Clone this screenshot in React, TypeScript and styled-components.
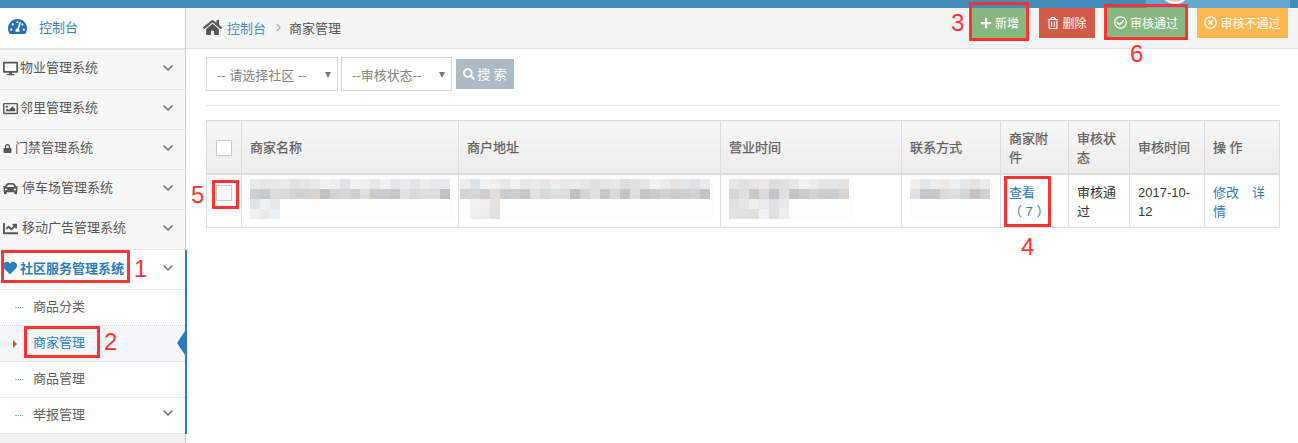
import React from 'react';
import styled, { createGlobalStyle } from 'styled-components';
import {
  FaCar,
  FaChartLine,
  FaDesktop,
  FaHeart,
  FaHome,
  FaLock,
  FaPlus,
  FaRegCheckCircle,
  FaRegImage,
  FaRegTimesCircle,
  FaRegTrashAlt,
  FaSearch,
  FaTachometerAlt,
} from 'react-icons/fa';
import { FiChevronDown, FiChevronRight } from 'react-icons/fi';

const GlobalStyle = createGlobalStyle`
  html, body {
    margin: 0;
    padding: 0;
    background: #fff;
    overflow: hidden;
  }
  body {
    font-family: "Liberation Sans", "Noto Sans CJK SC", sans-serif;
    font-size: 13px;
    color: #393939;
  }
  * {
    box-sizing: border-box;
  }
`;

const menuItems = [
  { label: '物业管理系统', icon: <FaDesktop size={15} />, gap: 2 },
  { label: '邻里管理系统', icon: <FaRegImage size={15} />, gap: 2 },
  { label: '门禁管理系统', icon: <FaLock size={9} />, gap: 3 },
  { label: '停车场管理系统', icon: <FaCar size={15} />, gap: 4 },
  { label: '移动广告管理系统', icon: <FaChartLine size={15} />, gap: 4 },
];

const subItems = [
  { label: '商品分类' },
  { label: '商家管理', active: true },
  { label: '商品管理' },
  { label: '举报管理', more: true },
];

// gray levels for the blurred out cells, each line is [first block, block count]
const hash = (a: number, b: number) => {
  const v = Math.sin(a * 12.9898 + b * 78.233) * 43758.5453;
  return v - Math.floor(v);
};

const Mosaic: React.FC<{ lines: [number, number][]; width: number; seed: number }> = ({ lines, width, seed }) => (
  <MosaicSvg width={width} height={40}>
    <rect x={0} y={0} width={width} height={40} rx={8} fill="#fcfcfc" />
    {lines.map(([start, count], row) =>
      Array.from({ length: count }).map((_, col) => {
        const base = row === 1 ? 192 : 222;
        const g = Math.round(base + hash(col + seed, row) * (row === 1 ? 34 : 20));
        const tint = Math.round(hash(col, row + seed) * 6) - 3;
        return (
          <rect
            key={`${row}-${col}`}
            x={(start + col) * 10}
            y={row * 10}
            width={10}
            height={10}
            fill={`rgb(${g + tint},${g},${g - tint})`}
          />
        );
      }),
    )}
  </MosaicSvg>
);

const App: React.FC = () => (
  <Stage>
    <GlobalStyle />
    <TopBar>
      <UserSlot>
        <Avatar />
      </UserSlot>
    </TopBar>
    <Body>
      <Sidebar>
        <Brand>
          <FaTachometerAlt size={19} />
          <span>控制台</span>
        </Brand>
        {menuItems.map((item) => (
          <MenuItem key={item.label} $gap={item.gap}>
            {item.icon}
            <span>{item.label}</span>
            <Chevron>
              <FiChevronDown size={16} />
            </Chevron>
          </MenuItem>
        ))}
        <OpenGroup>
          <MenuItem $gap={3} $open>
            <FaHeart size={14} />
            <span>社区服务管理系统</span>
            <Chevron>
              <FiChevronDown size={16} />
            </Chevron>
          </MenuItem>
          <SubMenu>
            {subItems.map((item) => (
              <SubItem key={item.label} $active={!!item.active}>
                <span>{item.label}</span>
                {item.more && (
                  <Chevron>
                    <FiChevronDown size={16} />
                  </Chevron>
                )}
              </SubItem>
            ))}
          </SubMenu>
        </OpenGroup>
      </Sidebar>
      <Main>
        <Toolbar>
          <Breadcrumb>
            <HomeIcon>
              <FaHome size={19} />
            </HomeIcon>
            <CrumbLink>控制台</CrumbLink>
            <CrumbSep>
              <FiChevronRight size={13} />
            </CrumbSep>
            <span>商家管理</span>
          </Breadcrumb>
          <Actions>
            <ActionButton $color="#87b87f" $width={55}>
              <FaPlus size={12} />
              新增
            </ActionButton>
            <ActionButton $color="#d15b47" $width={56}>
              <FaRegTrashAlt size={12} />
              删除
            </ActionButton>
            <ActionButton $color="#87b87f" $width={78}>
              <FaRegCheckCircle size={13} />
              审核通过
            </ActionButton>
            <ActionButton $color="#ffb752" $width={91}>
              <FaRegTimesCircle size={13} />
              审核不通过
            </ActionButton>
          </Actions>
        </Toolbar>
        <Content>
          <SearchRow>
            <SelectBox $width={132}>-- 请选择社区 --</SelectBox>
            <SelectBox $width={111}>--审核状态--</SelectBox>
            <SearchButton>
              <FaSearch size={12} />
              搜 索
            </SearchButton>
          </SearchRow>
          <DottedRule />
          <Table>
            <colgroup>
              <col width={35} />
              <col width={217} />
              <col width={262} />
              <col width={181} />
              <col width={99} />
              <col width={68} />
              <col width={61} />
              <col width={75} />
              <col width={75} />
            </colgroup>
            <thead>
              <tr>
                <Th>
                  <CheckBox />
                </Th>
                <Th>商家名称</Th>
                <Th>商户地址</Th>
                <Th>营业时间</Th>
                <Th>联系方式</Th>
                <Th>商家附件</Th>
                <Th>审核状态</Th>
                <Th>审核时间</Th>
                <Th>操 作</Th>
              </tr>
            </thead>
            <tbody>
              <tr>
                <Td>
                  <RowCheckBox $light />
                </Td>
                <MosaicTd $left={8}>
                  <Mosaic lines={[[0, 20], [0, 20], [0, 3], [0, 3]]} width={205} seed={3} />
                </MosaicTd>
                <MosaicTd $left={1}>
                  <Mosaic lines={[[0, 25], [0, 25], [1, 3], [1, 3]]} width={255} seed={11} />
                </MosaicTd>
                <MosaicTd $left={8}>
                  <Mosaic lines={[[0, 12], [0, 12], [0, 6], [0, 6]]} width={125} seed={23} />
                </MosaicTd>
                <MosaicTd $left={8}>
                  <Mosaic lines={[[0, 8], [0, 8]]} width={84} seed={37} />
                </MosaicTd>
                <Td>
                  <Link>
                    查看
                    <br />
                    （ 7 ）
                  </Link>
                </Td>
                <Td>审核通过</Td>
                <Td>2017-10-12</Td>
                <Td>
                  <Link>修改</Link>
                  <OpLink>详</OpLink>
                  <br />
                  <Link>情</Link>
                </Td>
              </tr>
            </tbody>
          </Table>
        </Content>
      </Main>
    </Body>

    <Marker $x={1} $y={250} $w={129} $h={33} />
    <Digit $x={134} $y={255}>1</Digit>
    <Marker $x={24} $y={326} $w={76} $h={32} />
    <Digit $x={104} $y={328}>2</Digit>
    <Marker $x={969} $y={2} $w={60} $h={39} />
    <Digit $x={951} $y={9}>3</Digit>
    <Marker $x={1004} $y={176} $w={47} $h={51} />
    <Digit $x={1021} $y={233}>4</Digit>
    <Marker $x={212} $y={180} $w={27} $h={29} />
    <Digit $x={191} $y={181}>5</Digit>
    <Marker $x={1104} $y={4} $w={84} $h={36} />
    <Digit $x={1130} $y={40}>6</Digit>
  </Stage>
);

const Stage = styled.div`
  position: relative;
  width: 1298px;
  height: 443px;
  overflow: hidden;
`;

const TopBar = styled.div`
  height: 8px;
  background: #438eb9;
  display: flex;
  justify-content: flex-end;
  padding-right: 8px;
`;

const UserSlot = styled.div`
  width: 144px;
  height: 8px;
  background: #62a8d1;
  overflow: hidden;
  padding-left: 14px;
`;

const Avatar = styled.div`
  width: 30px;
  height: 30px;
  margin-top: -26px;
  border-radius: 50%;
  border: 2px solid #fff;
  background: #e8c9bd;
`;

const Body = styled.div`
  display: flex;
  height: 435px;
`;

const Sidebar = styled.aside`
  width: 186px;
  flex: none;
  background: #f2f2f2;
  border-right: 1px solid #ccc;
`;

const Brand = styled.div`
  height: 42px;
  display: flex;
  align-items: center;
  gap: 12px;
  padding: 0 0 3px 8px;
  background: #fff;
  border-bottom: 2px solid #e5e5e5;
  color: #2b6fb0;

  span {
    color: #3d7fb8;
  }
`;

const MenuItem = styled.div<{ $gap: number; $open?: boolean }>`
  height: 40px;
  display: flex;
  align-items: center;
  gap: ${(p) => p.$gap}px;
  padding: 0 9px 3px 3px;
  background: ${(p) => (p.$open ? '#fff' : '#f8f8f8')};
  border-bottom: 1px solid #e5e5e5;
  color: ${(p) => (p.$open ? '#2b7dbc' : '#585858')};
  font-weight: ${(p) => (p.$open ? 700 : 400)};

  svg {
    flex: none;
  }

  > span:first-of-type {
    padding-bottom: ${(p) => (p.$open ? '1px' : '3px')};
  }
`;

const Chevron = styled.span`
  margin-left: auto;
  display: flex;
  color: #666;
  font-weight: 400;
`;

const OpenGroup = styled.div`
  margin-right: -2px;
  border-right: 2px solid #2b7dbc;
  position: relative;
`;

const SubMenu = styled.div`
  position: relative;
  background: #fff;
  border-bottom: 1px solid #e5e5e5;

  &::before {
    content: '';
    position: absolute;
    left: 14px;
    top: 0;
    bottom: 0;
    border-left: 1px dotted #7ea6cc;
  }
`;

const SubItem = styled.div<{ $active: boolean }>`
  position: relative;
  height: 36px;
  display: flex;
  align-items: center;
  padding: 0 9px 5px 33px;
  background: ${(p) => (p.$active ? '#f4f6f9' : '#fff')};
  border-bottom: 1px dotted #d8d8d8;
  color: ${(p) => (p.$active ? '#2b7dbc' : '#616161')};

  &:last-child {
    height: 35px;
    border-bottom: none;
  }

  &::before {
    content: '';
    position: absolute;
    top: 17px;
    left: ${(p) => (p.$active ? '13px' : '15px')};
    width: ${(p) => (p.$active ? '0' : '8px')};
    ${(p) =>
      p.$active
        ? `border-left: 4px solid #c86139; border-top: 4px solid transparent; border-bottom: 4px solid transparent; margin-top: -3px;`
        : `border-top: 1px dotted #7ea6cc;`}
  }

  &::after {
    content: '';
    display: ${(p) => (p.$active ? 'block' : 'none')};
    position: absolute;
    right: 0;
    top: 5px;
    border-right: 8px solid #2b7dbc;
    border-top: 12px solid transparent;
    border-bottom: 12px solid transparent;
  }
`;

const Main = styled.main`
  flex: 1;
  min-width: 0;
`;

const Toolbar = styled.div`
  height: 41px;
  display: flex;
  justify-content: space-between;
  background: #f5f5f5;
  border-bottom: 1px solid #e5e5e5;
  padding: 0 10px 0 17px;
`;

const Breadcrumb = styled.div`
  display: flex;
  align-items: center;
  padding-bottom: 2px;
  color: #555;
`;

const HomeIcon = styled.span`
  display: flex;
  margin-right: 5px;
  color: #555;
`;

const CrumbLink = styled.span`
  color: #4c8fbd;
`;

const CrumbSep = styled.span`
  display: flex;
  margin: 0 4px 0 6px;
  color: #a8adb6;
`;

const Actions = styled.div`
  display: flex;
  align-items: flex-start;
  gap: 12px;
`;

const ActionButton = styled.div<{ $color: string; $width: number }>`
  width: ${(p) => p.$width}px;
  height: 30px;
  display: flex;
  align-items: center;
  justify-content: center;
  gap: 3px;
  padding-bottom: 1px;
  background: ${(p) => p.$color};
  color: #fff;
  font-size: 12px;
`;

const Content = styled.div`
  padding: 8px 18px 0 20px;
`;

const SearchRow = styled.div`
  display: flex;
  align-items: center;
  gap: 3px;
`;

const SelectBox = styled.div<{ $width: number }>`
  position: relative;
  width: ${(p) => p.$width}px;
  height: 34px;
  display: flex;
  align-items: center;
  padding-left: 10px;
  border: 1px solid #d5d5d5;
  color: #858585;

  &::after {
    content: '';
    position: absolute;
    right: 6px;
    top: 14px;
    border-top: 6px solid #777;
    border-left: 3px solid transparent;
    border-right: 3px solid transparent;
  }
`;

const SearchButton = styled.div`
  width: 58px;
  height: 30px;
  margin-left: 1px;
  display: flex;
  align-items: center;
  justify-content: center;
  gap: 2px;
  padding-bottom: 1px;
  background: #abbac3;
  color: #fff;
`;

const DottedRule = styled.div`
  margin-top: 14px;
  border-top: 1px dotted #d8d8d8;
`;

const Table = styled.table`
  width: 1074px;
  margin-top: 14px;
  table-layout: fixed;
  border-collapse: collapse;
  border: 1px solid #ddd;
`;

const Th = styled.th`
  height: 53px;
  padding: 2px 8px 0;
  text-align: left;
  font-weight: 400;
  line-height: 19px;
  color: #5f5f5f;
  background: linear-gradient(#f8f8f8, #ececec);
  border: 1px solid #ddd;
  border-bottom: 2px solid #ddd;
  -webkit-text-stroke: 0.25px #5f5f5f;
`;

const Td = styled.td`
  height: 54px;
  padding: 8px 8px 0;
  line-height: 19px;
  color: #393939;
  vertical-align: top;
  border: 1px solid #ddd;
`;

const MosaicTd = styled(Td)<{ $left: number }>`
  padding: 4px 0 0 ${(p) => p.$left}px;
`;

const MosaicSvg = styled.svg`
  display: block;
`;

const CheckBox = styled.div<{ $light?: boolean }>`
  width: 16px;
  height: 16px;
  margin-left: 1px;
  border: 1px solid #ccc;
  background: ${(p) => (p.$light ? '#fafafa' : '#fff')};
`;

const RowCheckBox = styled(CheckBox)`
  margin-top: 2px;
`;

const Link = styled.span`
  color: #337ab7;
`;

const OpLink = styled(Link)`
  margin-left: 13px;
`;

const Marker = styled.div<{ $x: number; $y: number; $w: number; $h: number }>`
  position: absolute;
  left: ${(p) => p.$x}px;
  top: ${(p) => p.$y}px;
  width: ${(p) => p.$w}px;
  height: ${(p) => p.$h}px;
  border: 3px solid #ff3333;
`;

const Digit = styled.div<{ $x: number; $y: number }>`
  position: absolute;
  left: ${(p) => p.$x}px;
  top: ${(p) => p.$y}px;
  font-size: 24px;
  line-height: 28px;
  color: #ff3333;
`;

export default App;
